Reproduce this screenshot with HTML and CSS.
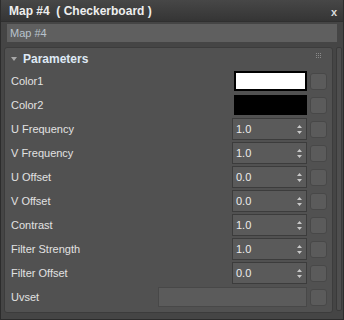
FILE: index.html
```html
<!DOCTYPE html>
<html lang="en">
<head>
    <meta charset="UTF-8">
    <title>Map #4 (Checkerboard)</title>
    <link rel="stylesheet" href="styles.css">
</head>
<body>
    <div class="window">
        <div class="titlebar">
            <span class="title">Map #4&nbsp;&nbsp;( Checkerboard )</span>
            <span class="close">x</span>
        </div>
        <div class="name-field">Map #4</div>

        <div class="content">
            <div class="rollout">
                <div class="rollout-header">
                    <span class="arrow"></span>
                    <span class="rollout-title">Parameters</span>
                    <span class="grip">
                        <i></i><i></i><i></i><i></i><i></i><i></i><i></i><i></i><i></i>
                    </span>
                </div>

                <div class="row">
                    <span class="label">Color1</span>
                    <div class="swatch white"></div>
                    <div class="map-btn"></div>
                </div>
                <div class="row">
                    <span class="label">Color2</span>
                    <div class="swatch black"></div>
                    <div class="map-btn"></div>
                </div>
                <div class="row">
                    <span class="label">U Frequency</span>
                    <div class="spinner"><span>1.0</span><svg class="spin" viewBox="0 0 5 9" width="5" height="9"><path d="M2.5 0 L5 3 L0 3 Z M2.5 9 L5 6 L0 6 Z"/></svg></div>
                    <div class="map-btn"></div>
                </div>
                <div class="row">
                    <span class="label">V Frequency</span>
                    <div class="spinner"><span>1.0</span><svg class="spin" viewBox="0 0 5 9" width="5" height="9"><path d="M2.5 0 L5 3 L0 3 Z M2.5 9 L5 6 L0 6 Z"/></svg></div>
                    <div class="map-btn"></div>
                </div>
                <div class="row">
                    <span class="label">U Offset</span>
                    <div class="spinner"><span>0.0</span><svg class="spin" viewBox="0 0 5 9" width="5" height="9"><path d="M2.5 0 L5 3 L0 3 Z M2.5 9 L5 6 L0 6 Z"/></svg></div>
                    <div class="map-btn"></div>
                </div>
                <div class="row">
                    <span class="label">V Offset</span>
                    <div class="spinner"><span>0.0</span><svg class="spin" viewBox="0 0 5 9" width="5" height="9"><path d="M2.5 0 L5 3 L0 3 Z M2.5 9 L5 6 L0 6 Z"/></svg></div>
                    <div class="map-btn"></div>
                </div>
                <div class="row">
                    <span class="label">Contrast</span>
                    <div class="spinner"><span>1.0</span><svg class="spin" viewBox="0 0 5 9" width="5" height="9"><path d="M2.5 0 L5 3 L0 3 Z M2.5 9 L5 6 L0 6 Z"/></svg></div>
                    <div class="map-btn"></div>
                </div>
                <div class="row">
                    <span class="label">Filter Strength</span>
                    <div class="spinner"><span>1.0</span><svg class="spin" viewBox="0 0 5 9" width="5" height="9"><path d="M2.5 0 L5 3 L0 3 Z M2.5 9 L5 6 L0 6 Z"/></svg></div>
                    <div class="map-btn"></div>
                </div>
                <div class="row">
                    <span class="label">Filter Offset</span>
                    <div class="spinner"><span>0.0</span><svg class="spin" viewBox="0 0 5 9" width="5" height="9"><path d="M2.5 0 L5 3 L0 3 Z M2.5 9 L5 6 L0 6 Z"/></svg></div>
                    <div class="map-btn"></div>
                </div>
                <div class="row">
                    <span class="label">Uvset</span>
                    <div class="text-input"></div>
                    <div class="map-btn"></div>
                </div>
            </div>
            <div class="scrollbar"></div>
        </div>
    </div>
</body>
</html>
```

FILE: styles.css
```css
body {
    margin: 0;
    background-color: #2b2b2b;
    font-family: "Liberation Sans", Arial, sans-serif;
    font-size: 11px;
    color: #e2e2e2;
}
.window {
    width: 344px;
    height: 320px;
    box-sizing: border-box;
    border: 1px solid #2c2c2c;
    border-top: none;
    background-color: #454545;
    display: flex;
    flex-direction: column;
}
.titlebar {
    height: 21px;
    display: flex;
    align-items: center;
    justify-content: space-between;
    padding: 0 6px 0 8px;
    background: linear-gradient(#474747, #353535);
    border-bottom: 1px solid #303030;
}
.title {
    font-size: 12px;
    font-weight: bold;
    color: #eeeeee;
}
.close {
    font-size: 11px;
    font-weight: bold;
    color: #dddddd;
    margin-top: 2px;
}
.name-field {
    height: 18px;
    margin: 2px 6px 0 6px;
    padding-left: 3px;
    line-height: 18px;
    background-color: #5f5f5f;
    color: #b9c3cd;
}
.content {
    flex: 1;
    display: flex;
    margin: 5px 1px 5px 3px;
    gap: 3px;
}
.rollout {
    flex: 1;
    box-sizing: border-box;
    height: 266px;
    background-color: #515151;
    border: 1px solid #3c3c3c;
    border-radius: 3px;
    padding: 0 5px 0 6px;
}
.scrollbar {
    width: 4px;
    height: 262px;
    background-color: #4e4e4e;
    border: 1px solid #3a3a3a;
    border-radius: 2px;
}
.rollout-header {
    height: 21px;
    display: flex;
    align-items: center;
}
.arrow {
    width: 0;
    height: 0;
    border-left: 3px solid transparent;
    border-right: 3px solid transparent;
    border-top: 4px solid #a8a8a8;
    margin: 0 6px 0 0;
}
.rollout-title {
    font-size: 12px;
    font-weight: bold;
    color: #dfe9f5;
    flex: 1;
}
.grip {
    display: grid;
    grid-template-columns: repeat(3, 1px);
    gap: 1px;
    margin: -6px 6px 0 0;
}
.grip i {
    width: 1px;
    height: 1px;
    background-color: #8a8a8a;
}
.row {
    height: 24px;
    display: flex;
    align-items: center;
}
.label {
    flex: 1;
}
.swatch {
    width: 73px;
    height: 20px;
    box-sizing: border-box;
    border: 2px solid #000;
}
.swatch.white {
    background-color: #ffffff;
}
.swatch.black {
    background-color: #000000;
}
.spinner {
    width: 75px;
    height: 22px;
    box-sizing: border-box;
    border: 1px solid #3c3c3c;
    background-color: #5a5a5a;
    display: flex;
    align-items: center;
    justify-content: space-between;
    padding: 0 4px 0 3px;
    color: #ececec;
}
.spin {
    fill: #c8c8c8;
}
.text-input {
    width: 149px;
    height: 20px;
    box-sizing: border-box;
    border: 1px solid #484848;
    background-color: #5b5b5b;
}
.map-btn {
    width: 17px;
    height: 17px;
    box-sizing: border-box;
    margin-left: 3px;
    border: 1px solid #484848;
    border-radius: 3px;
    background-color: #5b5b5b;
}
```
